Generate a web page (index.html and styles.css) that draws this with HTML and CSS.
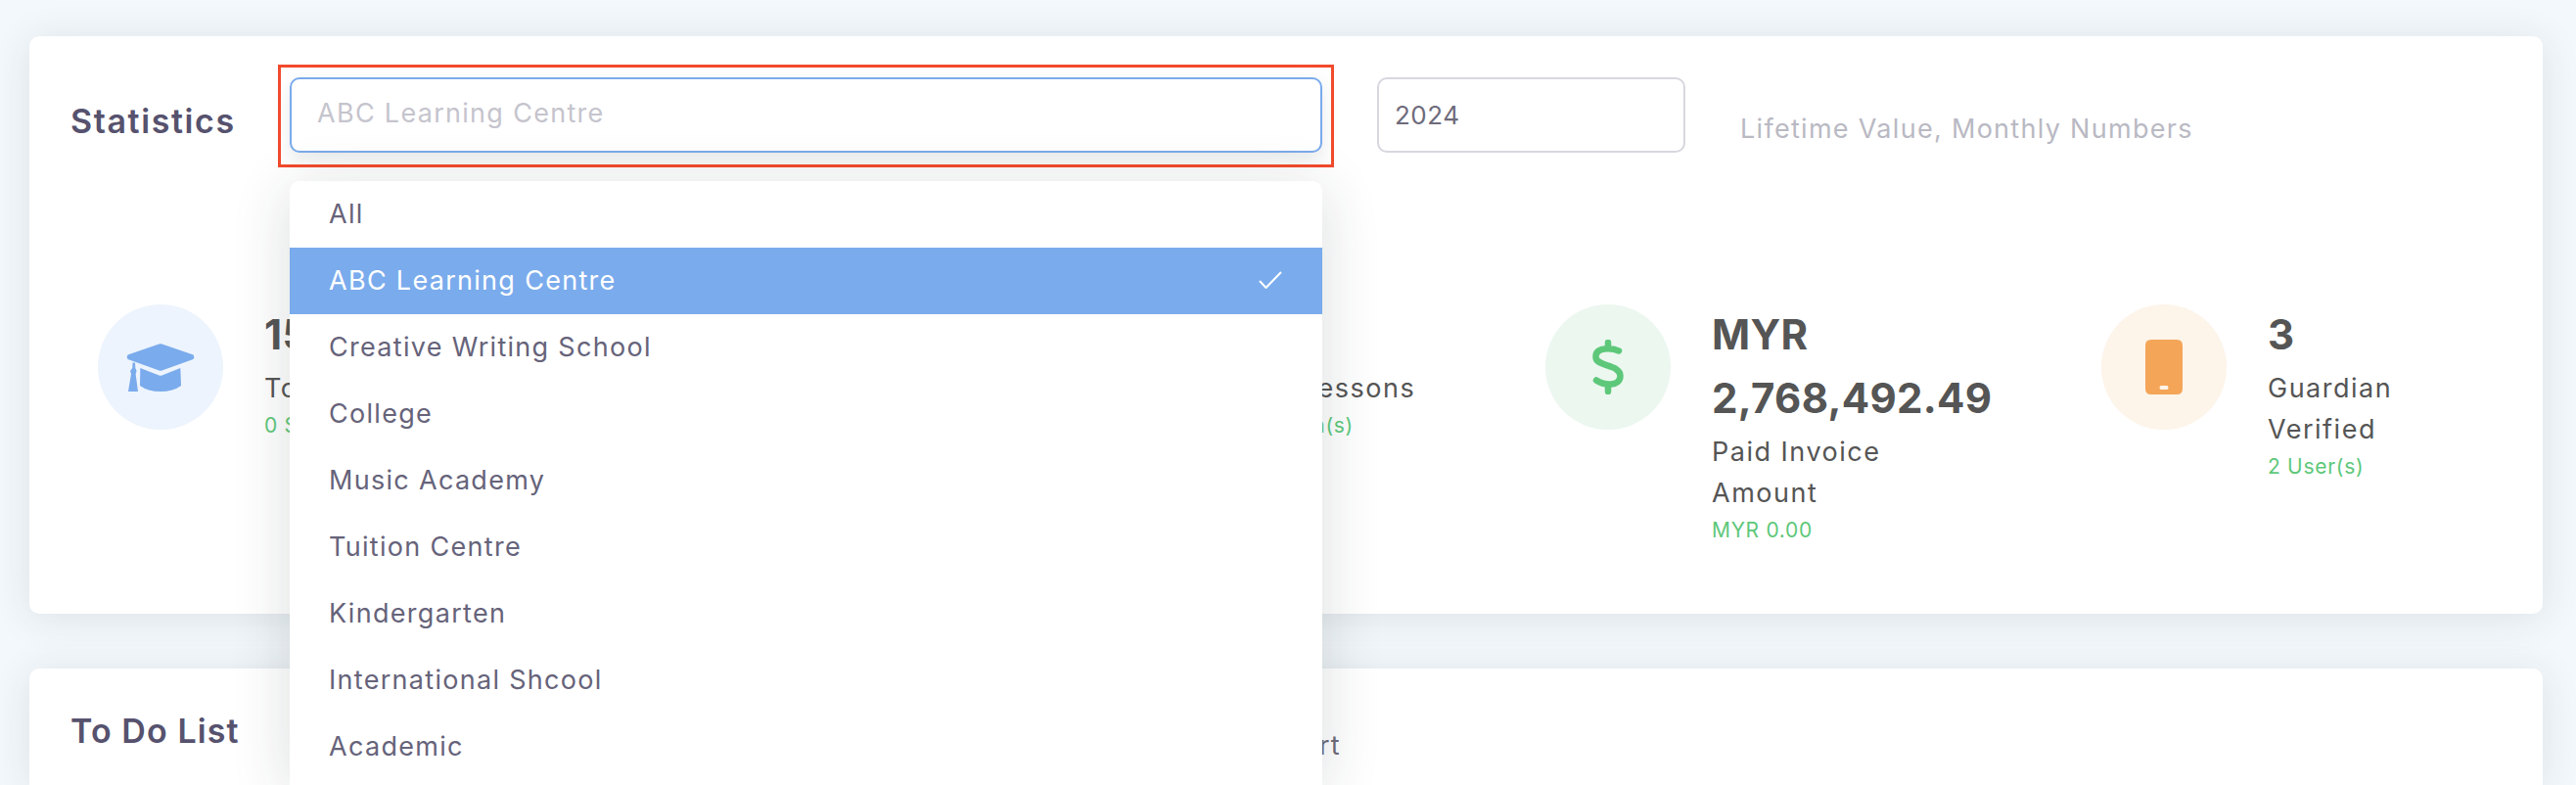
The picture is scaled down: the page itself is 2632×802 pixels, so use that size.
FILE: index.html
```html
<!DOCTYPE html>
<html lang="en">

<head>
  <meta charset="UTF-8">
  <title>Dashboard</title>
  <link rel="stylesheet" href="styles.css">
</head>

<body>
  <section class="card stats-card">
    <div class="card-head">
      <h2 class="card-title">Statistics</h2>

      <div class="select">
        <div class="select-input">ABC Learning Centre</div>
        <div class="highlight"></div>
        <ul class="select-menu">
          <li>All</li>
          <li class="selected">ABC Learning Centre
            <svg class="check" viewBox="0 0 24 18"><path d="M1 10l6.500 7L23 1" /></svg>
          </li>
          <li>Creative Writing School</li>
          <li>College</li>
          <li>Music Academy</li>
          <li>Tuition Centre</li>
          <li>Kindergarten</li>
          <li>International Shcool</li>
          <li>Academic</li>
        </ul>
      </div>

      <div class="year-input">2024</div>
      <p class="card-note">Lifetime Value, Monthly Numbers</p>
    </div>

    <div class="stats">
      <div class="stat">
        <div class="stat-icon icon-blue">
          <svg width="70" height="49" viewBox="0 0 70 49">
            <path d="M33.500.5L1.500 11.500Q0 13.700 1.500 16L33.500 27.500Q35 28 36.500 27.500L68.500 16Q70 13.700 68.500 11.500L36.500.5Q35 0 33.500.5Z" />
            <path d="M14.300 25L33.500 32.500Q35 33 36.500 32.500L55.300 25L56 43Q48 49 35 49Q22 49 14 43Z" />
            <path d="M6.500 19.500L9 19.500L9.300 25L10.600 28L9.600 31L12 49L2 49L5 31L4 28L6.300 25Z" />
          </svg>
        </div>
        <div class="stat-text">
          <strong class="stat-value">15</strong>
          <span class="stat-label">Total Students</span>
          <small class="stat-sub">0 Student(s)</small>
        </div>
      </div>

      <div class="stat">
        <div class="stat-icon icon-blue"></div>
        <div class="stat-text">
          <strong class="stat-value">0</strong>
          <span class="stat-label">Total Lessons</span>
          <small class="stat-sub">0 Session(s)</small>
        </div>
      </div>

      <div class="stat">
        <div class="stat-icon icon-green">
          <svg width="32" height="56" viewBox="0 0 32 56">
            <path d="M16 3v6M16 47v6M27 11.500C20 8.500 3 7 3.500 18C4 28 28.500 25 28.500 37C28.500 48 12 47 4 41.500" />
          </svg>
        </div>
        <div class="stat-text">
          <strong class="stat-value">MYR 2,768,492.49</strong>
          <span class="stat-label">Paid Invoice Amount</span>
          <small class="stat-sub">MYR 0.00</small>
        </div>
      </div>

      <div class="stat">
        <div class="stat-icon icon-orange">
          <svg width="38" height="56" viewBox="0 0 38 56">
            <path fill-rule="evenodd" d="M6 0H32Q38 0 38 6V50Q38 56 32 56H6Q0 56 0 50V6Q0 0 6 0ZM16 47Q14.500 47 14.500 49T16 51H22Q23.500 51 23.500 49T22 47Z" />
          </svg>
        </div>
        <div class="stat-text">
          <strong class="stat-value">3</strong>
          <span class="stat-label">Guardian Verified</span>
          <small class="stat-sub">2 User(s)</small>
        </div>
      </div>
    </div>
  </section>

  <section class="card todo-card">
    <div class="todo-head">
      <h2 class="card-title">To Do List</h2>
      <span class="todo-link">Attendance Report</span>
    </div>
  </section>
</body>

</html>
```

FILE: styles.css
```css
* {
  box-sizing: border-box;
}

html,
body {
  height: 802px;
  overflow: hidden;
}

body {
  margin: 0;
  padding: 37px 34px 0 30px;
  background: #f3f8fc;
  font-family: Inter, "Noto Sans", sans-serif;
  color: #6e6b7b;
}

.card {
  background: #fff;
  border-radius: 10px;
  box-shadow: 0 4px 40px rgba(34, 41, 47, .11);
}

.stats-card {
  height: 590px;
  padding: 42px 43px 0;
}

.card-head {
  display: flex;
  align-items: flex-start;
}

.card-title {
  width: 223px;
  margin: 0 0 0 -1px;
  flex: none;
  padding-top: 23px;
  font-size: 34px;
  line-height: 44px;
  font-weight: 600;
  letter-spacing: 1.600px;
  color: #56526e;
}

/* select */
.select {
  position: relative;
  width: 1055px;
  height: 77px;
  margin-left: 1px;
}

.select-input {
  height: 77px;
  padding: 0 26px;
  border: 2px solid #7aabec;
  border-radius: 10px;
  background: #fff;
  box-shadow: 0 6px 18px rgba(34, 41, 47, .1);
  font-size: 27px;
  line-height: 69px;
  letter-spacing: 1.300px;
  color: #c5c4cd;
}

.highlight {
  position: absolute;
  top: -13px;
  left: -12px;
  right: -12px;
  bottom: -15px;
  border: 3px solid #f24a2d;
}

.select-menu {
  position: absolute;
  top: 106px;
  left: 0;
  width: 100%;
  height: 617px;
  margin: 0;
  padding: 0;
  list-style: none;
  background: #fff;
  border-radius: 10px 10px 0 0;
  box-shadow: 0 8px 60px rgba(34, 41, 47, .16);
  z-index: 5;
}

.select-menu li {
  display: flex;
  align-items: center;
  justify-content: space-between;
  height: 68px;
  padding: 0 41px 2px 40px;
  font-size: 27px;
  letter-spacing: 1.300px;
  color: #66637a;
}

.select-menu .selected {
  background: #7aabec;
  color: #fff;
}

.check {
  width: 24px;
  height: 18px;
  fill: none;
  stroke: #fff;
  stroke-width: 2;
}

.year-input {
  width: 315px;
  height: 77px;
  margin-left: 56px;
  padding: 0 16px;
  border: 2px solid #d8d6de;
  border-radius: 10px;
  font-size: 26px;
  line-height: 73px;
  letter-spacing: .5px;
}

.card-note {
  margin: 31px 0 0 56px;
  font-size: 27px;
  line-height: 44px;
  letter-spacing: 1.300px;
  color: #b9b9c3;
}

/* stats */
.stats {
  display: grid;
  grid-template-columns: 981px 498px 568px 1fr;
  margin: 155px 0 0 27px;
}

.stat {
  display: flex;
  align-items: flex-start;
}

.stat-icon {
  display: flex;
  align-items: center;
  justify-content: center;
  flex: none;
  width: 128px;
  height: 128px;
  border-radius: 50%;
}

.icon-blue {
  background: #edf4fd;
  fill: #7aabec;
}

.icon-green {
  background: #ecf7f0;
}

.icon-green path {
  fill: none;
  stroke: #5ec87a;
  stroke-width: 6.500;
  stroke-linecap: round;
}

.icon-orange {
  background: #fdf4ea;
  fill: #f4a557;
}

.stat-text {
  display: flex;
  flex-direction: column;
  align-items: flex-start;
  width: 300px;
  margin-left: 42px;
}

.stat-value {
  margin-top: -2px;
  margin-bottom: 2px;
  font-size: 42px;
  line-height: 65px;
  font-weight: 700;
  letter-spacing: .3px;
  color: #555;
}

.stat-label {
  width: 230px;
  font-size: 27px;
  line-height: 42px;
  letter-spacing: 1.500px;
  color: #555;
}

.stat-sub {
  margin-top: 3px;
  font-size: 21px;
  line-height: 28px;
  letter-spacing: .7px;
  color: #5ec87a;
}

/* to do */
.todo-card {
  height: 119px;
  margin-top: 56px;
  padding: 42px 43px 0;
  border-radius: 10px 10px 0 0;
}

.todo-head {
  display: flex;
  align-items: flex-start;
}

.todo-head .card-title {
  width: 1038px;
  padding-top: 0;
  letter-spacing: 1.100px;
}

.todo-link {
  padding-top: 15px;
  font-size: 27px;
  line-height: 44px;
  letter-spacing: 1.300px;
  color: #6e6b7b;
}
```
